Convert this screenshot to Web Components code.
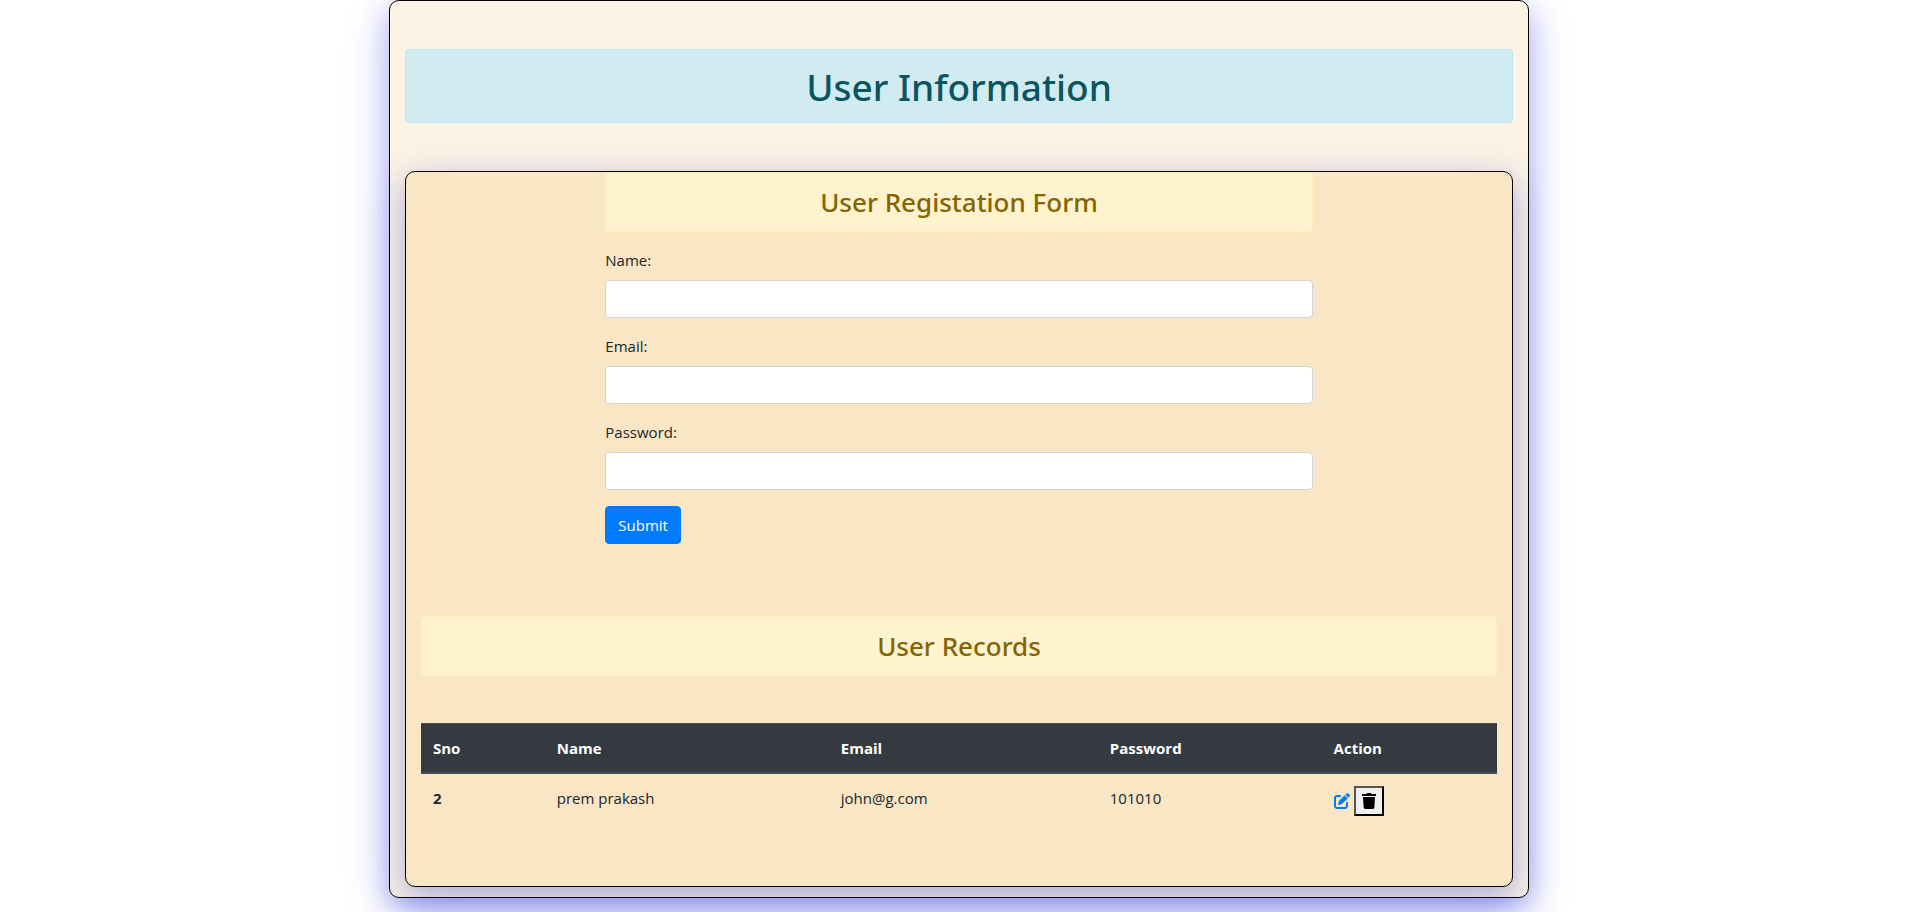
<!DOCTYPE html>
<html lang="en">
<head>
<meta charset="utf-8">
<meta name="viewport" content="width=device-width, initial-scale=1">
<title>User Information</title>
<style>
body { margin: 0; background: #fff; color: #212529; font: 400 15px/24px "Open Sans", "Segoe UI", sans-serif; overflow-x: hidden; }
</style>
</head>
<body>
<user-page></user-page>
<script>
const define = (name, html, setup) => {
  customElements.define(name, class extends HTMLElement {
    constructor() {
      super();
      const root = this.attachShadow({ mode: "open" });
      root.innerHTML = "<style>*{box-sizing:border-box}</style>" + html;
    }
    connectedCallback() { if (setup) setup(this, this.shadowRoot); }
  });
};

define("info-banner", `<style>
:host { display: block; padding: 13px 20px 11px; border: 1px solid #bee5eb; border-radius: 4px; background: #d1ecf1; color: #0c5460; text-align: center; }
h1 { margin: 0; font-family: "Noto Sans", sans-serif; font-size: 37px; line-height: 48px; font-weight: 500; }
</style><h1><slot></slot></h1>`);

define("section-title", `<style>
:host { display: block; padding: 12px 20px; border: 1px solid #ffeeba; border-radius: 4px; background: #fff3cd; color: #856404; text-align: center; }
h2 { margin: 0; font-family: "Noto Sans", sans-serif; font-size: 26px; line-height: 34px; font-weight: 500; }
</style><h2><slot></slot></h2>`);

define("form-field", `<style>
:host { display: block; }
label { display: block; margin-bottom: 8px; }
input { display: block; width: 100%; height: 38px; padding: 6px 12px; border: 1px solid #ced4da; border-radius: 4px; background: #fff; color: #495057; font: inherit; }
</style><label for="control"></label><input id="control">`, (host, root) => {
  root.querySelector("label").textContent = host.getAttribute("label");
  root.querySelector("input").type = host.getAttribute("type") || "text";
});

define("registration-form", `<style>
:host { display: block; width: calc(100% * 2 / 3); padding: 0 5px; margin: 0 auto; }
form { display: grid; gap: 16px; margin: 16px 0 0; }
button { justify-self: start; height: 38px; padding: 6px 12px; border: 1px solid #007bff; border-radius: 4px; background: #007bff; color: #fff; font: inherit; }
</style>
<section-title>User Registation Form</section-title>
<form>
<form-field label="Name:" type="text"></form-field>
<form-field label="Email:" type="email"></form-field>
<form-field label="Password:" type="password"></form-field>
<button type="submit">Submit</button>
</form>`);

define("record-actions", `<style>
:host { display: flex; align-items: center; gap: 4px; }
a { display: flex; color: #007bff; }
svg { display: block; width: 16px; height: 16px; }
button { display: grid; place-items: center; width: 30px; height: 30px; padding: 0; border: 2px outset #000; background: #efefef; color: #000; }
</style>
<a href="#edit" aria-label="Edit"><svg viewBox="0 0 512 512" fill="currentColor"><path d="M471.6 21.7c-21.9-21.9-57.300-21.900-79.200 0L362.300 51.700l97.900 97.900 30.100-30.100c21.900-21.900 21.900-57.300 0-79.200L471.600 21.700zM172.400 241.700c-6.100 6.100-10.800 13.600-13.500 21.900l-29.600 88.800c-2.900 8.600-.6 18.100 5.800 24.600s15.900 8.700 24.600 5.800l88.800-29.600c8.200-2.700 15.700-7.400 21.900-13.500L437.700 172.300 339.700 74.300 172.400 241.700zM96 64C43 64 0 107 0 160V416c0 53 43 96 96 96H352c53 0 96-43 96-96V320c0-17.700-14.300-32-32-32s-32 14.300-32 32v96c0 17.700-14.300 32-32 32H96c-17.700 0-32-14.300-32-32V160c0-17.700 14.300-32 32-32h96c17.700 0 32-14.300 32-32s-14.300-32-32-32H96z"/></svg></a>
<button type="button" aria-label="Delete"><svg viewBox="-32 0 512 512" fill="currentColor"><path d="M432 32H312l-9.400-18.700A24 24 0 0 0 281.100 0H166.800a23.720 23.720 0 0 0-21.400 13.300L136 32H16A16 16 0 0 0 0 48v32a16 16 0 0 0 16 16h416a16 16 0 0 0 16-16V48a16 16 0 0 0-16-16zM53.200 467a48 48 0 0 0 47.900 45h245.800a48 48 0 0 0 47.900-45L416 128H32z"/></svg></button>`);

define("records-table", `<style>
:host { display: block; }
table { width: 100%; border-collapse: collapse; table-layout: fixed; }
th, td { padding: 12px; text-align: left; vertical-align: top; }
thead th { background: #343a40; color: #fff; border-top: 1px solid #454d55; border-bottom: 2px solid #454d55; font-weight: 700; }
.sno { width: 11.5%; } .name { width: 26.4%; } .email { width: 25%; } .pass { width: 20.8%; }
</style>
<table>
<thead><tr><th scope="col" class="sno">Sno</th><th scope="col" class="name">Name</th><th scope="col" class="email">Email</th><th scope="col" class="pass">Password</th><th scope="col">Action</th></tr></thead>
<tbody><tr><th scope="row">2</th><td>prem prakash</td><td>john@g.com</td><td>101010</td><td><record-actions></record-actions></td></tr></tbody>
</table>`);

define("page-panel", `<style>
:host { display: block; border: 1px solid #000; border-radius: 10px; padding: 0 15px; }
</style><slot></slot>`);

define("user-page", `<style>
:host { display: block; padding: 0 0 14px 4px; }
.outer { max-width: 1140px; margin: 0 auto; padding: 48px 15px 10px; background: #fcf3e5; box-shadow: 0 10px 30px rgba(40,50,220,.33), 0 12px 50px rgba(40,50,220,.15); }
.inner { margin-top: 48px; padding-bottom: 58px; background: #f8e6c5; box-shadow: 0 10px 30px rgba(40,50,200,.3), 0 12px 50px rgba(40,50,200,.1); }
.records { margin-top: 72px; }
records-table { margin-top: 47px; }
</style>
<page-panel class="outer">
<info-banner>User Information</info-banner>
<page-panel class="inner">
<registration-form></registration-form>
<section-title class="records">User Records</section-title>
<records-table></records-table>
</page-panel>
</page-panel>`);
</script>
</body>
</html>
